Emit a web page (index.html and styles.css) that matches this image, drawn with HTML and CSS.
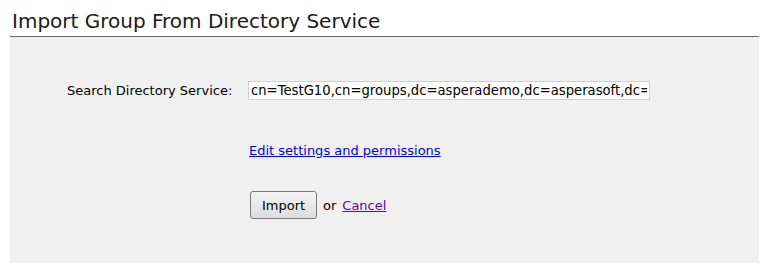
FILE: index.html
```html
<!DOCTYPE html>
<html lang="en">
<head>
    <meta charset="UTF-8">
    <title>Import Group From Directory Service</title>
    <link rel="stylesheet" href="styles.css">
</head>
<body>
    <div class="page">
        <h1 class="title">Import Group From Directory Service</h1>
        <div class="panel">
            <form class="import-form">
                <label class="field-label" for="dn">Search Directory Service:</label>
                <input class="field-input" type="text" id="dn" value="cn=TestG10,cn=groups,dc=asperademo,dc=asperasoft,dc=com">

                <div class="field-empty"></div>
                <a class="settings-link" href="#">Edit settings and permissions</a>

                <div class="field-empty"></div>
                <div class="actions">
                    <button class="btn" type="button">Import</button>
                    <span>or</span>
                    <a class="cancel-link" href="#">Cancel</a>
                </div>
            </form>
        </div>
    </div>
</body>
</html>
```

FILE: styles.css
```css
body {
    margin: 0;
    background-color: #ffffff;
    font-family: "DejaVu Sans", Verdana, sans-serif;
    font-size: 13px;
    color: #000000;
}

.page {
    padding: 9px 10px 0 10px;
}

.title {
    margin: 0;
    padding: 0 0 3px 2px;
    font-size: 20px;
    line-height: 24px;
    font-weight: normal;
    color: #1a1a1a;
    border-bottom: 1px solid #666666;
}

.panel {
    background-color: #f0f0f0;
    height: 226px;
}

.import-form {
    display: grid;
    grid-template-columns: 238px 402px;
    align-items: center;
    padding-top: 44px;
}

.field-label {
    padding-left: 57px;
    white-space: nowrap;
}

.field-input {
    box-sizing: border-box;
    width: 402px;
    height: 19px;
    margin: 0;
    padding: 0 2px;
    border: 1px solid #d0d0d0;
    background-color: #ffffff;
    font-family: inherit;
    font-size: 13.2px;
}

.field-input:focus {
    outline: none;
}

.settings-link {
    margin-top: 43px;
    margin-left: 1px;
    color: #0000ee;
    white-space: nowrap;
}

.actions {
    display: flex;
    align-items: center;
    gap: 6px;
    margin-top: 33px;
    margin-left: 2px;
}

.btn {
    width: 67px;
    height: 28px;
    border: 1px solid #7a7a7a;
    border-radius: 3px;
    background: linear-gradient(#f4f4f4, #dcdcdc);
    font-family: inherit;
    font-size: 13px;
    color: #000000;
    padding: 0;
}

.cancel-link {
    color: #660099;
}
```
